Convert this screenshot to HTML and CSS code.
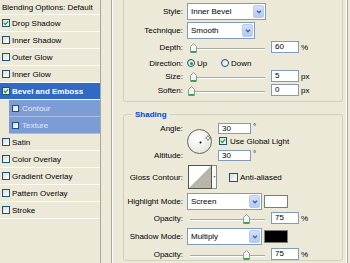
FILE: index.html
```html
<!DOCTYPE html>
<html lang="en">
<head>
    <meta charset="UTF-8">
    <title>Layer Style</title>
    <link rel="stylesheet" href="styles.css">
</head>
<body>
    <div class="dialog">
        <ul class="styles">
            <li class="head">Blending Options: Default</li>
            <li><span class="cb"><svg viewBox="0 0 7 7"><path d="M1 3.4 L2.8 5.2 L6 1.6" /></svg></span>Drop Shadow</li>
            <li><span class="cb"></span>Inner Shadow</li>
            <li><span class="cb"></span>Outer Glow</li>
            <li><span class="cb"></span>Inner Glow</li>
            <li class="sel"><span class="cb"><svg viewBox="0 0 7 7"><path d="M1 3.4 L2.8 5.2 L6 1.6" /></svg></span>Bevel and Emboss</li>
            <li class="sub"><span class="cb"></span>Contour</li>
            <li class="sub"><span class="cb"></span>Texture</li>
            <li><span class="cb"></span>Satin</li>
            <li><span class="cb"></span>Color Overlay</li>
            <li><span class="cb"></span>Gradient Overlay</li>
            <li><span class="cb"></span>Pattern Overlay</li>
            <li><span class="cb"></span>Stroke</li>
        </ul>

        <div class="panel">
            <!-- Structure group, its title is scrolled out of view -->
            <div class="group structure">
                <div class="row r-select">
                    <span class="lbl">Style:</span>
                    <div class="select w-style"><span class="val">Inner Bevel</span><span class="btn"><svg viewBox="0 0 7 5"><path d="M1 1 L3.5 3.5 L6 1" /></svg></span></div>
                </div>
                <div class="row r-select gap2">
                    <span class="lbl">Technique:</span>
                    <div class="select w-tech"><span class="val">Smooth</span><span class="btn"><svg viewBox="0 0 7 5"><path d="M1 1 L3.5 3.5 L6 1" /></svg></span></div>
                </div>
                <div class="row r-slider gap2">
                    <span class="lbl">Depth:</span>
                    <div class="slider"><span class="track"></span><svg class="thumb" style="left:3px" viewBox="0 0 7 10"><path class="tb" d="M0.5 3.5 L3.5 0.5 L6.5 3.5 V9.5 H0.5 Z" /><path class="tg" d="M1 8.8 H6" /></svg></div>
                    <span class="field">60</span><span class="unit">%</span>
                </div>
                <div class="row r-slider gap4">
                    <span class="lbl">Direction:</span>
                    <span class="radio on"></span><span class="rlbl">Up</span>
                    <span class="radio"></span><span class="rlbl">Down</span>
                </div>
                <div class="row r-slider gap1">
                    <span class="lbl">Size:</span>
                    <div class="slider"><span class="track"></span><svg class="thumb" style="left:3px" viewBox="0 0 7 10"><path class="tb" d="M0.5 3.5 L3.5 0.5 L6.5 3.5 V9.5 H0.5 Z" /><path class="tg" d="M1 8.8 H6" /></svg></div>
                    <span class="field">5</span><span class="unit">px</span>
                </div>
                <div class="row r-slider gap2">
                    <span class="lbl">Soften:</span>
                    <div class="slider"><span class="track"></span><svg class="thumb" style="left:1px" viewBox="0 0 7 10"><path class="tb" d="M0.5 3.5 L3.5 0.5 L6.5 3.5 V9.5 H0.5 Z" /><path class="tg" d="M1 8.8 H6" /></svg></div>
                    <span class="field">0</span><span class="unit">px</span>
                </div>
            </div>

            <fieldset class="group shading">
                <legend>Shading</legend>
                <div class="angle-block">
                    <div class="angle-labels">
                        <span class="lbl">Angle:</span>
                        <span class="lbl">Altitude:</span>
                    </div>
                    <svg class="dial" viewBox="0 0 25 25">
                        <defs>
                            <radialGradient id="dialFill" cx="0.4" cy="0.35" r="0.7">
                                <stop offset="0" stop-color="#ffffff" />
                                <stop offset="1" stop-color="#e4e4de" />
                            </radialGradient>
                        </defs>
                        <circle cx="12.5" cy="12.5" r="12" fill="url(#dialFill)" stroke="#66665f" />
                        <circle cx="13.5" cy="13.5" r="1" fill="#000" />
                        <path d="M21 6.5 V8 M21 10 V11.5 M18.5 9 H20 M22 9 H23.5" stroke="#333" stroke-width="1" />
                    </svg>
                    <div class="angle-fields">
                        <div class="afield"><span class="field wide">30</span><span class="deg">°</span></div>
                        <div class="check-row"><span class="cb"><svg viewBox="0 0 7 7"><path d="M1 3.4 L2.8 5.2 L6 1.6" /></svg></span>Use Global Light</div>
                        <div class="afield alt"><span class="field wide">30</span><span class="deg">°</span></div>
                    </div>
                </div>

                <div class="row r-contour">
                    <span class="lbl">Gloss Contour:</span>
                    <svg class="contour" viewBox="0 0 24 24">
                        <rect x="0.5" y="0.5" width="23" height="23" fill="#fff" stroke="#55554f" />
                        <path d="M1 23 L23 1 V23 Z" fill="#b9b5a8" />
                    </svg>
                    <span class="cbtn"><svg viewBox="0 0 5 3"><path d="M0.5 0.5 H4.5 L2.5 2.5 Z" /></svg></span>
                    <span class="cb aa"></span><span>Anti-aliased</span>
                </div>

                <div class="row r-select gap4">
                    <span class="lbl">Highlight Mode:</span>
                    <div class="select w-mode"><span class="val">Screen</span><span class="btn"><svg viewBox="0 0 7 5"><path d="M1 1 L3.5 3.5 L6 1" /></svg></span></div>
                    <span class="swatch white"></span>
                </div>
                <div class="row r-slider gap2">
                    <span class="lbl">Opacity:</span>
                    <div class="slider"><span class="track"></span><svg class="thumb" style="left:56px" viewBox="0 0 7 10"><path class="tb" d="M0.5 3.5 L3.5 0.5 L6.5 3.5 V9.5 H0.5 Z" /><path class="tg" d="M1 8.8 H6" /></svg></div>
                    <span class="field">75</span><span class="unit">%</span>
                </div>
                <div class="row r-select gap4">
                    <span class="lbl">Shadow Mode:</span>
                    <div class="select w-mode"><span class="val">Multiply</span><span class="btn"><svg viewBox="0 0 7 5"><path d="M1 1 L3.5 3.5 L6 1" /></svg></span></div>
                    <span class="swatch black"></span>
                </div>
                <div class="row r-slider gap3">
                    <span class="lbl">Opacity:</span>
                    <div class="slider"><span class="track"></span><svg class="thumb" style="left:56px" viewBox="0 0 7 10"><path class="tb" d="M0.5 3.5 L3.5 0.5 L6.5 3.5 V9.5 H0.5 Z" /><path class="tg" d="M1 8.8 H6" /></svg></div>
                    <span class="field">75</span><span class="unit">%</span>
                </div>
            </fieldset>
        </div>
    </div>
</body>
</html>
```

FILE: styles.css
```css
* {
    box-sizing: border-box;
}
body {
    margin: 0;
    background-color: #ece9d8;
    font-family: "Liberation Sans", Arial, sans-serif;
    font-size: 8px;
    color: #000;
    overflow: hidden;
}
.dialog {
    display: flex;
    width: 350px;
    height: 263px;
    overflow: hidden;
}

/* style list on the left */
.styles {
    list-style: none;
    margin: 0;
    padding: 0;
    width: 101px;
    flex: none;
    border-right: 1px solid #a9a798;
}
.styles li {
    height: 17px;
    display: flex;
    align-items: center;
    padding-left: 2px;
    border-bottom: 1px solid #fbfaf4;
    white-space: nowrap;
}
.styles .head {
    height: 15px;
}
.styles .sel {
    background-color: #316ac5;
    color: #fff;
    font-weight: bold;
}
.styles .sub {
    margin-left: 9px;
    padding-left: 3px;
    background-color: #7c9cd5;
    color: #e4e9f6;
    border-bottom-color: #a8bce3;
}
.styles .sub .cb {
    width: 7px;
    height: 7px;
    margin-right: 3px;
}

.cb {
    width: 8px;
    height: 8px;
    flex: none;
    border: 1px solid #1c5180;
    background: linear-gradient(135deg, #dcdbd2, #fff);
    margin-right: 2px;
    display: flex;
}
.cb svg {
    width: 100%;
    height: 100%;
}
.cb path {
    fill: none;
    stroke: #21a121;
    stroke-width: 1.5;
}

/* right side panel */
.panel {
    margin-left: 10px;
    width: 237px;
    flex: none;
    padding: 0 4px 0 11px;
    border-left: 1px solid #aca899;
    border-right: 1px solid #aca899;
    box-shadow: inset 1px 0 #fff, inset -1px 0 #fff;
}
.group {
    border: 1px solid #d0d0bf;
}
.structure {
    border-top: none;
    border-radius: 0 0 3px 3px;
    padding: 3px 0 5px 0;
}
.shading {
    margin: 8px 0 0 0;
    padding: 4px 0 0 0;
    border-radius: 3px;
    min-width: 0;
}
.shading legend {
    margin-left: 8px;
    padding: 0 3px;
    line-height: 9px;
    color: #0046d5;
    font-weight: bold;
}

.row {
    display: flex;
    align-items: center;
}
.r-select {
    height: 17px;
}
.r-slider {
    height: 12px;
}
.r-contour {
    height: 24px;
    margin-top: 4px;
}
.gap1 { margin-top: 1px; }
.gap2 { margin-top: 2px; }
.gap3 { margin-top: 3px; }
.gap4 { margin-top: 4px; }

.lbl {
    width: 59px;
    flex: none;
    margin-right: 4px;
    text-align: right;
    white-space: nowrap;
}

/* combo boxes */
.select {
    height: 17px;
    display: flex;
    align-items: center;
    background-color: #fff;
    border: 1px solid #7f9db9;
    padding: 1px;
}
.select .val {
    flex: 1;
    padding-left: 2px;
}
.select .btn {
    width: 11px;
    height: 100%;
    display: flex;
    align-items: center;
    justify-content: center;
    border-radius: 2px;
    border: 1px solid #b9cbf3;
    background: linear-gradient(#d3e0fd, #b4c9f6);
}
.select .btn svg {
    width: 6px;
    height: 4px;
}
.select .btn path {
    fill: none;
    stroke: #4d6185;
    stroke-width: 1.6;
}
.w-style { width: 79px; }
.w-tech { width: 68px; }
.w-mode { width: 75px; }

/* sliders */
.slider {
    position: relative;
    width: 81px;
    height: 12px;
    flex: none;
}
.slider .track {
    position: absolute;
    left: 3px;
    right: 3px;
    top: 7px;
    height: 2px;
    border-top: 1px solid #a9a89c;
    border-bottom: 1px solid #fff;
}
.slider .thumb {
    position: absolute;
    top: 2px;
    width: 7px;
    height: 10px;
}
.thumb .tb {
    fill: #f6f6f2;
    stroke: #8c9aa6;
    stroke-width: 1;
}
.thumb .tg {
    stroke: #21a121;
    stroke-width: 1.4;
}

.field {
    width: 28px;
    height: 12px;
    flex: none;
    margin-left: 3px;
    padding-left: 3px;
    background-color: #fff;
    border: 1px solid #7f9db9;
    line-height: 10px;
}
.field.wide {
    width: 33px;
    margin-left: 0;
}
.unit {
    margin-left: 2px;
}

/* radio buttons */
.radio {
    width: 8px;
    height: 8px;
    flex: none;
    border: 1px solid #1c5180;
    border-radius: 50%;
    background: linear-gradient(135deg, #dcdbd2, #fff);
    display: flex;
    align-items: center;
    justify-content: center;
}
.radio.on::after {
    content: "";
    width: 3px;
    height: 3px;
    border-radius: 50%;
    background-color: #21a121;
}
.rlbl {
    margin-left: 2px;
    width: 24px;
}

/* angle dial and its fields */
.angle-block {
    display: flex;
    height: 38px;
}
.angle-labels {
    display: flex;
    flex-direction: column;
    justify-content: space-between;
}
.angle-labels .lbl {
    line-height: 11px;
}
.dial {
    width: 25px;
    height: 25px;
    margin-top: 6px;
    flex: none;
}
.angle-fields {
    margin-left: 6px;
}
.afield {
    display: flex;
    height: 11px;
}
.afield .field {
    height: 11px;
    line-height: 9px;
}
.afield.alt {
    margin-top: 5px;
}
.deg {
    margin-left: 2px;
    line-height: 7px;
}
.check-row {
    display: flex;
    align-items: center;
    margin-top: 3px;
    height: 8px;
    white-space: nowrap;
}
.check-row .cb {
    margin-left: 1px;
    margin-right: 3px;
}

/* gloss contour picker */
.contour {
    width: 24px;
    height: 24px;
    margin-left: 1px;
    flex: none;
}
.cbtn {
    width: 5px;
    height: 24px;
    flex: none;
    border: 1px solid #8b8b84;
    border-left: none;
    background-color: #f8f8f6;
    display: flex;
    align-items: center;
    justify-content: center;
}
.cbtn svg {
    width: 3px;
    height: 2px;
}
.cbtn path {
    fill: #000;
}
.cb.aa {
    width: 9px;
    height: 9px;
    margin-left: 12px;
    border-color: #1c5180;
}

/* colour swatches */
.swatch {
    width: 24px;
    height: 13px;
    margin-left: 2px;
    flex: none;
    border: 1px solid #7d7d77;
}
.swatch.white {
    background-color: #fff;
}
.swatch.black {
    background-color: #000;
}
```
